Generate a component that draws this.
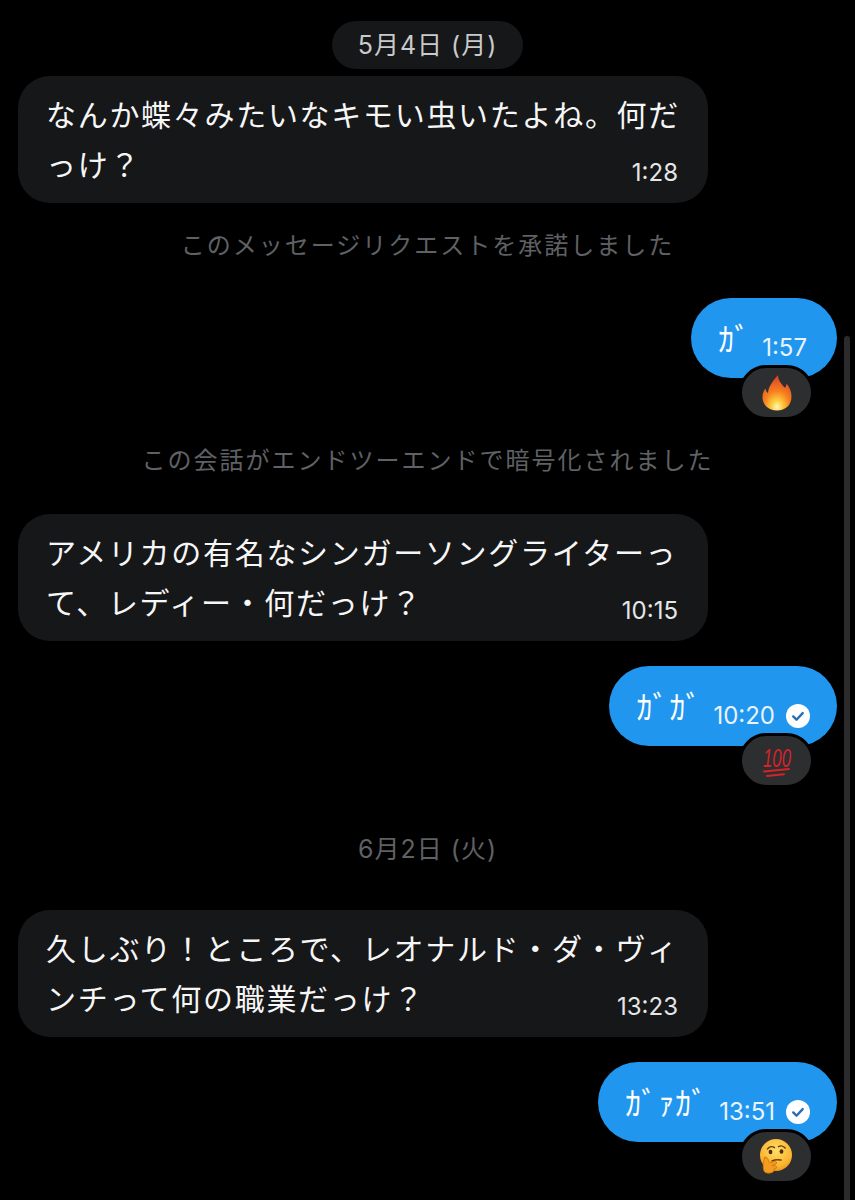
<div class="page">
  <div class="thread">
    <div class="date pill"><span>5月4日 (月)</span></div>

    <div class="row in first">
      <div class="bubble dark">
        <div class="text">なんか蝶々みたいなキモい虫いたよね。何だ<br />っけ？</div>
        <div class="meta">1:28</div>
      </div>
    </div>

    <div class="system s1">このメッセージリクエストを承諾しました</div>

    <div class="row out o1">
      <div class="bubble blue plainmeta">
        <span class="kana">ｶﾞ</span>
        <span class="time">1:57</span>
      </div>
    </div>
    <div class="react-row">
      <div class="react">
        <svg width="32" height="36" viewBox="0 0 32 36">
          <defs>
            <radialGradient id="fl" cx="0.5" cy="0.9" r="0.9">
              <stop offset="0" stop-color="#fff8c8" />
              <stop offset="0.2" stop-color="#ffcf3f" />
              <stop offset="0.5" stop-color="#f6811f" />
              <stop offset="1" stop-color="#dd3a28" />
            </radialGradient>
          </defs>
          <path fill="url(#fl)" d="M17 0c0 5 3 8 6 12 1 1 2 0 2-1 .5-1.500.5-2 .5-2.500 3 3.500 5 8 5 13 0 8.500-6 14-14.500 14S1.500 30 1.500 22c0-4 1.500-6.500 3-8.500.5 2 1 3.500 2.500 4.500C7.500 11 12 6 17 0z" />
        </svg>
      </div>
    </div>

    <div class="system s2">この会話がエンドツーエンドで暗号化されました</div>

    <div class="row in r2">
      <div class="bubble dark">
        <div class="text">アメリカの有名なシンガーソングライターっ<br />て、レディー・何だっけ？</div>
        <div class="meta">10:15</div>
      </div>
    </div>

    <div class="row out o2">
      <div class="bubble blue">
        <span class="kana">ｶﾞｶﾞ</span>
        <span class="time">10:20</span>
        <svg class="check" width="24" height="24" viewBox="0 0 24 24">
          <circle cx="12" cy="12" r="12" fill="#fff" />
          <path d="M7.2 12.4l3.3 3.3 6.2-6.6" fill="none" stroke="#2a6fb5" stroke-width="2.4" stroke-linecap="round" stroke-linejoin="round" />
        </svg>
      </div>
    </div>
    <div class="react-row">
      <div class="react">
        <svg width="60" height="36" viewBox="0 0 60 36">
          <text class="hundred" x="16" y="24" textLength="28" lengthAdjust="spacingAndGlyphs">100</text>
          <path d="M17 28.500l25-2.500M20 33l17-1.800" fill="none" stroke="#d3242a" stroke-width="2" stroke-linecap="round" />
        </svg>
      </div>
    </div>

    <div class="date plain">6月2日 (火)</div>

    <div class="row in r3">
      <div class="bubble dark">
        <div class="text">久しぶり！ところで、レオナルド・ダ・ヴィ<br />ンチって何の職業だっけ？</div>
        <div class="meta">13:23</div>
      </div>
    </div>

    <div class="row out o2">
      <div class="bubble blue">
        <span class="kana">ｶﾞｧｶﾞ</span>
        <span class="time">13:51</span>
        <svg class="check" width="24" height="24" viewBox="0 0 24 24">
          <circle cx="12" cy="12" r="12" fill="#fff" />
          <path d="M7.2 12.4l3.3 3.3 6.2-6.6" fill="none" stroke="#2a6fb5" stroke-width="2.4" stroke-linecap="round" stroke-linejoin="round" />
        </svg>
      </div>
    </div>
    <div class="react-row">
      <div class="react">
        <svg class="think" width="34" height="36" viewBox="0 0 34 36">
          <defs>
            <radialGradient id="fc" cx="0.5" cy="0.35" r="0.7">
              <stop offset="0" stop-color="#ffdd67" />
              <stop offset="0.7" stop-color="#fbb62f" />
              <stop offset="1" stop-color="#ee8a1a" />
            </radialGradient>
          </defs>
          <circle cx="17" cy="16" r="16" fill="url(#fc)" />
          <path d="M8.500 10c2-2.500 5-2.800 7-1.400M19.500 7.700c2-1.200 5-.7 6.600 1.200" fill="none" stroke="#6b3f10" stroke-width="1.500" stroke-linecap="round" />
          <ellipse cx="11.500" cy="13" rx="1.900" ry="2.300" fill="#4a2c0c" />
          <ellipse cx="22.500" cy="12.500" rx="1.900" ry="2.300" fill="#4a2c0c" />
          <path d="M13 22c3-1.500 6-1.500 9-1" fill="none" stroke="#6b3f10" stroke-width="1.600" stroke-linecap="round" />
          <path fill="#f39c1f" stroke="#c8730f" stroke-width="0.800" d="M5 18.500c1.500-1 3-.5 4 1.500l1.500 3.500 5-1c2-.3 3 1.500 1.500 2.500l-4 1.500 3.500.5c1.500.5 1.500 2 0 2.500l-1.500.5c.5 1.500-.5 3-2 3.500-3 1.200-7 .8-8-1.500-1.200-3-1.200-9.500.5-13z" />
        </svg>
      </div>
    </div>
  </div>
  <div class="scrollbar"></div>
</div>

<style>
  :global(body) {
    margin: 0;
    background: #000;
  }
  .page {
    position: relative;
    height: 1200px;
    overflow: hidden;
    background: #000;
    font-family: "Noto Sans CJK JP", "Noto Sans", sans-serif;
    color: #fff;
  }
  .thread {
    display: flex;
    flex-direction: column;
    padding: 21px 18px 0;
  }
  .date {
    align-self: center;
    font-size: 25px;
    line-height: 48px;
    letter-spacing: 1px;
    font-family: Inter, "Noto Sans CJK JP", sans-serif;
  }
  .pill {
    width: 191px;
    text-align: center;
    background: #161719;
    border-radius: 24px;
    color: #c9cacb;
  }
  .plain {
    margin-top: 39px;
    color: #5f6164;
  }
  .row {
    display: flex;
  }
  .in {
    justify-content: flex-start;
  }
  .out {
    justify-content: flex-end;
  }
  .first {
    margin-top: 7px;
  }
  .r2 {
    margin-top: 38px;
  }
  .r3 {
    margin-top: 37px;
  }
  .o1 {
    margin-top: 37px;
  }
  .o2 {
    margin-top: 25px;
  }
  .bubble {
    box-sizing: border-box;
  }
  .dark {
    width: 690px;
    height: 127px;
    padding: 12px 30px 0 28px;
    background: #161719;
    border-radius: 32px;
  }
  .text {
    font-size: 30px;
    line-height: 50px;
    letter-spacing: 1.7px;
    white-space: nowrap;
    color: #f6f6f6;
  }
  .meta {
    margin-top: -28px;
    text-align: right;
    font-family: Inter, "Liberation Sans", sans-serif;
    font-size: 24px;
    line-height: 26px;
    color: #e6e6e6;
  }
  .blue {
    display: flex;
    align-items: flex-start;
    height: 80px;
    padding: 0 27px;
    background: #2196ee;
    border-radius: 40px;
  }
  .plainmeta {
    padding-right: 30px;
  }
  .kana {
    font-size: 32px;
    line-height: 40px;
    margin-top: 19px;
    letter-spacing: 1px;
    color: #fff;
    white-space: nowrap;
  }
  .time {
    margin-top: 37px;
    margin-left: 11px;
    font-family: Inter, "Liberation Sans", sans-serif;
    font-size: 24px;
    line-height: 26px;
    color: #e8f3fc;
  }
  .check {
    margin-top: 38px;
    margin-left: 11px;
  }
  .react-row {
    display: flex;
    justify-content: flex-end;
    padding-right: 26px;
    height: 40px;
  }
  .react {
    width: 69px;
    height: 49px;
    margin-top: -13px;
    margin-right: -3px;
    display: flex;
    align-items: center;
    justify-content: center;
    background: #2d2e30;
    border-radius: 28px;
    border: 3px solid #000;
  }
  .think {
    margin-left: -1px;
  }
  .system {
    text-align: center;
    font-size: 24px;
    line-height: 34px;
    letter-spacing: 2px;
    color: #5f6164;
  }
  .s1 {
    margin-top: 24px;
  }
  .s2 {
    margin-top: 24px;
  }
  .hundred {
    font-family: "Liberation Sans", sans-serif;
    font-style: italic;
    font-size: 26px;
    fill: #d3242a;
  }
  .scrollbar {
    position: absolute;
    top: 336px;
    bottom: 0;
    left: 844px;
    width: 6px;
    background: #2b2b2c;
    border-radius: 3px 3px 0 0;
  }
</style>
